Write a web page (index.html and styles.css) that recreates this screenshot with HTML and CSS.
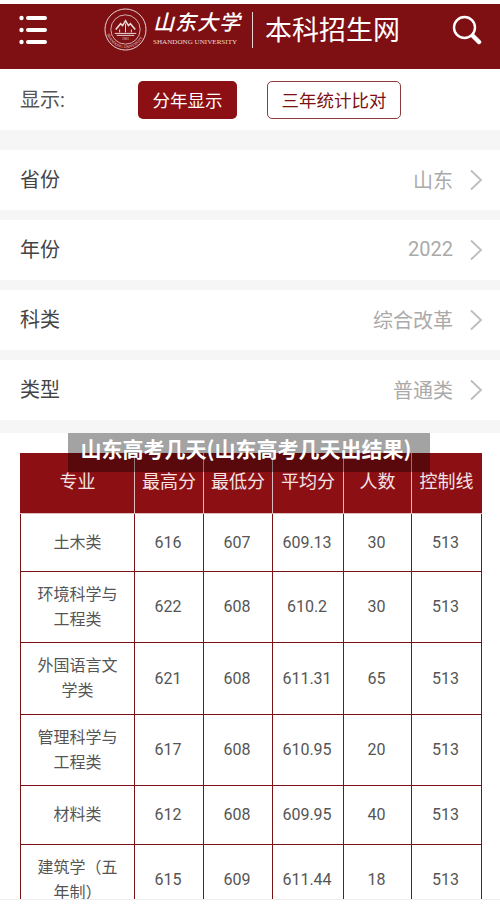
FILE: index.html
```html
<!DOCTYPE html>
<html lang="zh">
<head>
<meta charset="utf-8">
<title>本科招生网</title>
<link rel="stylesheet" href="styles.css">
</head>
<body>
<div class="page">
  <header class="header">
    <svg class="menu-icon" viewBox="0 0 30 32" width="30" height="32">
      <g fill="#fff">
        <circle cx="2.5" cy="3" r="2.2"/><circle cx="2.5" cy="15" r="2.2"/><circle cx="2.5" cy="27" r="2.2"/>
        <rect x="7" y="1" width="21" height="4" rx="2"/><rect x="7" y="13" width="21" height="4" rx="2"/><rect x="7" y="25" width="21" height="4" rx="2"/>
      </g>
    </svg>
    <svg class="seal" viewBox="0 0 44 44" width="43" height="43">
      <defs><path id="sealArc" d="M2.800 25a19.500 19.500 0 0 0 38.400 0"/></defs>
      <g fill="none" stroke="#eadbdb">
        <circle cx="22" cy="22" r="21" stroke-width="1"/>
        <circle cx="22" cy="22" r="15" stroke-width=".8"/>
        <path d="M12 22l5-6 2 2 3-5 3 5 2-2 5 6" stroke-width="1.600"/>
        <path d="M16 22v3M22 16v9M28 22v3M11 26h22M13 28h18" stroke-width="1"/>
      </g>
      <text class="seal-text"><textPath href="#sealArc" startOffset="3%">SHANDONG UNIVERSITY</textPath></text>
      <text class="seal-year" x="22" y="33" text-anchor="middle">1901</text>
    </svg>
    <div class="brand">
      <div class="brand-cn">山东大学</div>
      <div class="brand-en">SHANDONG UNIVERSITY</div>
    </div>
    <div class="divider"></div>
    <div class="site-title">本科招生网</div>
    <svg class="search-icon" viewBox="0 0 30 30" width="30" height="30">
      <circle cx="12.5" cy="12.5" r="10.500" fill="none" stroke="#fff" stroke-width="2.400"/>
      <path d="M21 21l6 6" stroke="#fff" stroke-width="4.500" stroke-linecap="round"/>
    </svg>
  </header>

  <section class="display-row">
    <span class="display-label">显示:</span>
    <button class="btn btn-active">分年显示</button>
    <button class="btn btn-outline">三年统计比对</button>
  </section>

  <section class="filters">
    <div class="filter-row"><span class="filter-label">省份</span><span class="filter-value">山东</span><svg class="chev" viewBox="0 0 14 22" width="14" height="22"><path d="M2 1.500l10 9.500-10 9.500" fill="none" stroke="#bdbdbd" stroke-width="1.800"/></svg></div>
    <div class="filter-row"><span class="filter-label">年份</span><span class="filter-value">2022</span><svg class="chev" viewBox="0 0 14 22" width="14" height="22"><path d="M2 1.500l10 9.500-10 9.500" fill="none" stroke="#bdbdbd" stroke-width="1.800"/></svg></div>
    <div class="filter-row"><span class="filter-label">科类</span><span class="filter-value">综合改革</span><svg class="chev" viewBox="0 0 14 22" width="14" height="22"><path d="M2 1.500l10 9.500-10 9.500" fill="none" stroke="#bdbdbd" stroke-width="1.800"/></svg></div>
    <div class="filter-row"><span class="filter-label">类型</span><span class="filter-value">普通类</span><svg class="chev" viewBox="0 0 14 22" width="14" height="22"><path d="M2 1.500l10 9.500-10 9.500" fill="none" stroke="#bdbdbd" stroke-width="1.800"/></svg></div>
  </section>

  <section class="table-wrap">
    <table class="scores">
      <colgroup>
        <col class="c-major"><col class="c-a"><col class="c-b"><col class="c-c"><col class="c-d"><col class="c-e">
      </colgroup>
      <thead>
        <tr><th>专业</th><th>最高分</th><th>最低分</th><th>平均分</th><th>人数</th><th>控制线</th></tr>
      </thead>
      <tbody>
        <tr class="r58"><td>土木类</td><td>616</td><td>607</td><td>609.13</td><td>30</td><td>513</td></tr>
        <tr class="r71"><td>环境科学与工程类</td><td>622</td><td>608</td><td>610.2</td><td>30</td><td>513</td></tr>
        <tr class="r72"><td>外国语言文学类</td><td>621</td><td>608</td><td>611.31</td><td>65</td><td>513</td></tr>
        <tr class="r71"><td>管理科学与工程类</td><td>617</td><td>608</td><td>610.95</td><td>20</td><td>513</td></tr>
        <tr class="r59"><td>材料类</td><td>612</td><td>608</td><td>609.95</td><td>40</td><td>513</td></tr>
        <tr class="r71"><td>建筑学（五年制）</td><td>615</td><td>609</td><td>611.44</td><td>18</td><td>513</td></tr>
      </tbody>
    </table>
    <div class="overlay-title">山东高考几天(山东高考几天出结果)</div>
  </section>
  <div class="foot"></div>
</div>
</body>
</html>
```
FILE: styles.css
```css
* { box-sizing: border-box; }
html, body { margin: 0; padding: 0; height: 905px; overflow: hidden; background: #fff; }
body { font-family: Roboto, "Noto Sans CJK SC", sans-serif; }
.page { width: 500px; height: 905px; padding-top: 4px; display: flex; flex-direction: column; background: #fff; overflow: hidden; }

.header { height: 65px; flex: none; background: #7e0f12; color: #fff; display: flex; align-items: flex-start; position: relative; }
.menu-icon { margin: 11px 0 0 19px; flex: none; }
.seal { margin: 4px 0 0 55px; flex: none; }
.seal-text { font: 4px "Liberation Serif", serif; fill: #eadbdb; }
.seal-year { font: 3.500px "Liberation Serif", serif; fill: #eadbdb; }
.brand { margin: 0 0 0 6px; width: 87px; flex: none; }
.brand-cn { font-family: "Noto Sans CJK SC", sans-serif; font-size: 21px; line-height: 26px; margin-top: 4px; letter-spacing: 1px; font-style: italic; white-space: nowrap; font-weight: 500; }
.brand-en { font-family: "Liberation Serif", serif; font-size: 7.100px; line-height: 10px; white-space: nowrap; margin-top: 3px; color: #eadbdb; }
.divider { width: 1px; height: 36px; background: #e6d5d5; margin: 8px 0 0 12px; flex: none; }
.site-title { font-family: "Noto Sans CJK SC", sans-serif; font-size: 27px; font-weight: 400; line-height: 38px; margin: 6px 0 0 12px; white-space: nowrap; flex: none; }
.search-icon { margin: 11px 0 0 52px; flex: none; }

.display-row { height: 61px; flex: none; display: flex; align-items: center; padding-left: 20px; background: #fff; }
.display-label { font-size: 20px; font-weight: 400; color: #555; width: 118px; flex: none; padding-bottom: 3px; }
.btn { height: 38px; font-family: "Noto Sans CJK SC", sans-serif; font-size: 17.500px; font-weight: 400; border-radius: 5px; padding: 0; flex: none; }
.btn-active { width: 99px; background: #8c0f14; color: #fff; border: 0; margin-right: 30px; }
.btn-outline { width: 134px; background: #fff; color: #7e0f12; border: 1px solid #8c3a3e; }

.filters { background: #f6f6f6; padding: 20px 0 13px; display: flex; flex-direction: column; gap: 10px; flex: none; }
.filter-row { height: 60px; background: #fff; display: flex; align-items: center; padding: 0 17px 0 20px; }
.filter-label { font-size: 20px; font-weight: 400; color: #444; flex: 1; padding-bottom: 3px; }
.filter-value { font-size: 20px; font-weight: 400; color: #aaa; margin-right: 16px; padding-bottom: 2px; }

.table-wrap { position: relative; flex: none; height: 466px; padding: 20px 19px 0 20px; background: #fff; overflow: hidden; }
.scores { width: 461px; table-layout: fixed; border-collapse: collapse; font-weight: 400; color: #555; }
.c-major { width: 114px; } .c-a { width: 69px; } .c-b { width: 69px; } .c-c { width: 71px; } .c-d { width: 68px; } .c-e { width: 70px; }
.scores th { height: 60px; background: #8c0f14; color: #f3e3e3; font-size: 18px; font-weight: 400; border: 1px solid #dcbcbe; border-top-color: #8c0f14; padding: 0 0 8px; }
.scores th:first-child { border-left-color: #8c0f14; }
.scores th:last-child { border-right-color: #8c0f14; }
.scores td { border: 1px solid #7a1216; text-align: center; font-size: 16px; line-height: 25px; padding: 0 12px 1px; }
.scores td:not(:first-child) { padding: 0 2px 1px 0; }
.r58 td { height: 58px; } .r59 td { height: 59px; } .r71 td { height: 71px; } .r72 td { height: 72px; }

.overlay-title { position: absolute; left: 68px; top: 0; width: 362px; height: 39px; background: rgba(0,0,0,.36); color: #fff; font-family: "Noto Sans CJK SC", sans-serif; font-size: 21px; font-weight: 700; line-height: 31px; padding-left: 12.500px; white-space: nowrap; }
.foot { flex: none; height: 6px; background: #fff; border-top: 1px solid #efefef; position: relative; }
```
